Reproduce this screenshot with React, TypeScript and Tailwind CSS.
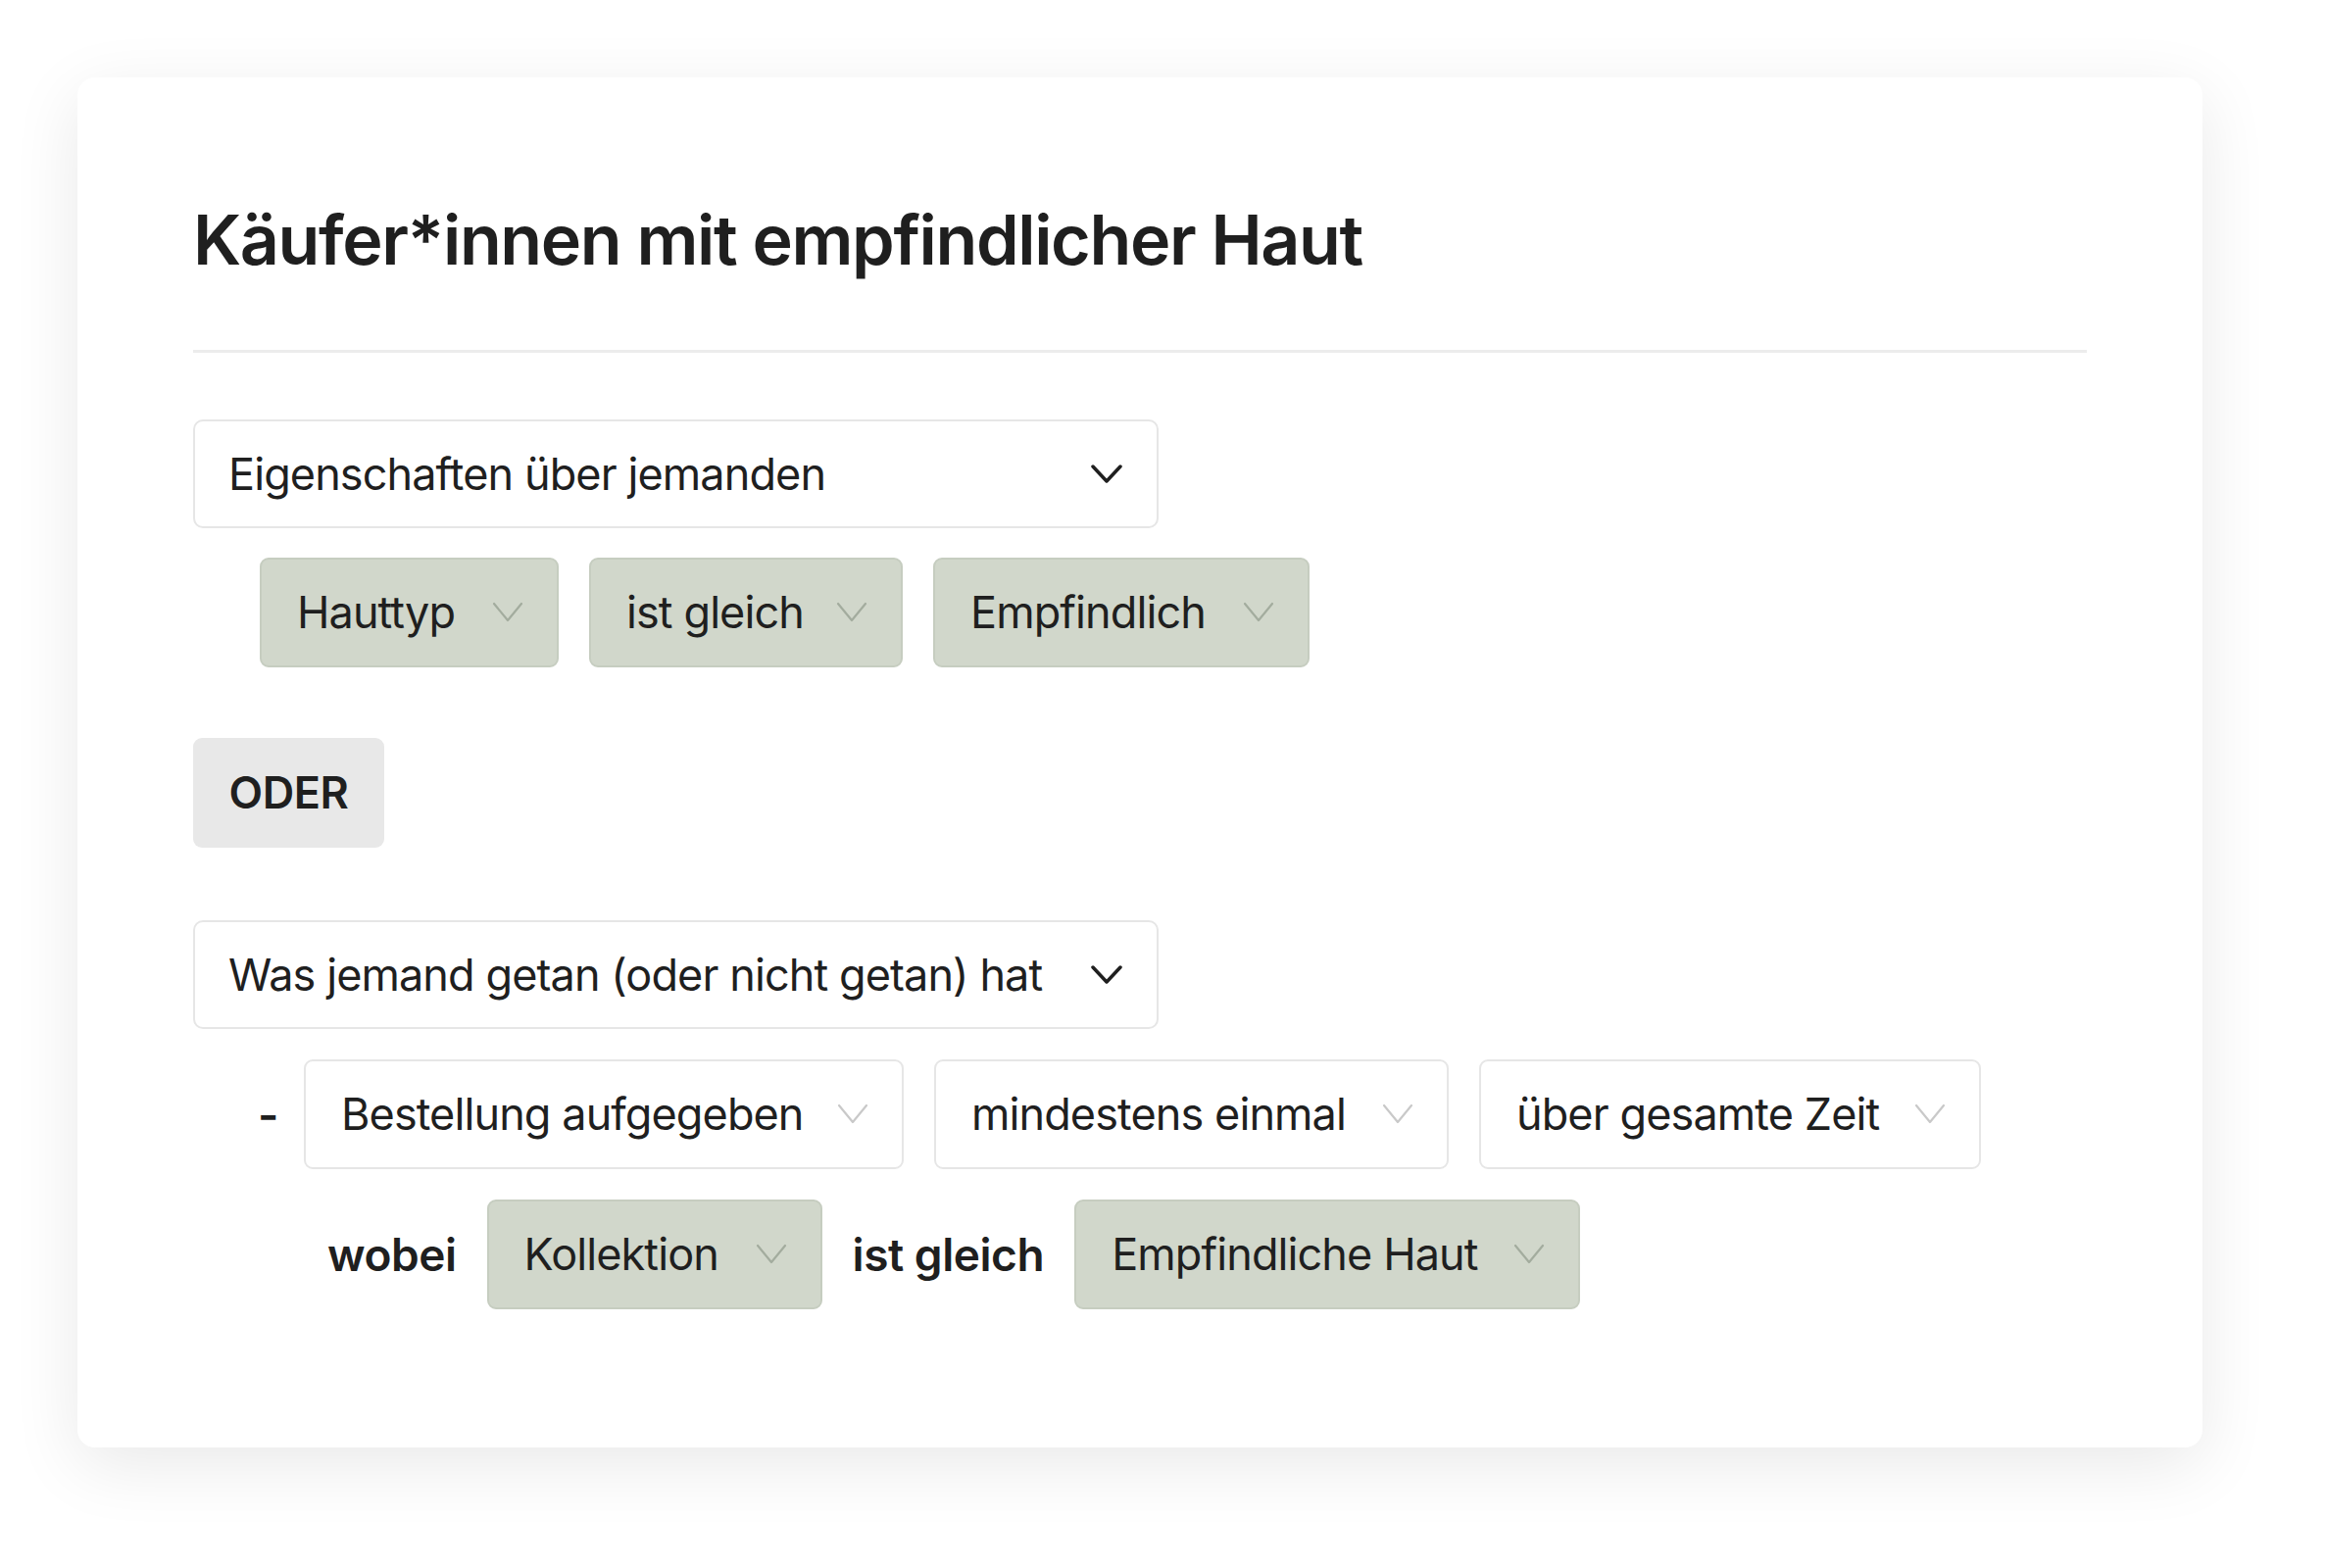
import type { ReactNode } from 'react';

// ── Chevrons ────────────────────────────────────────────────

function BoldChevron() {
  return (
    <svg width="32" height="21" viewBox="0 0 32 21" fill="none" className="shrink-0">
      <polyline points="2,3 16,18 30,3" stroke="#1f1f1f" strokeWidth="3.5" strokeLinecap="round" strokeLinejoin="round" />
    </svg>
  );
}

function ThinChevron({ color }: { color: string }) {
  return (
    <svg width="32" height="22" viewBox="0 0 32 22" fill="none" className="shrink-0">
      <polyline points="2,2 16,19 30,2" stroke={color} strokeWidth="2.2" strokeLinecap="round" strokeLinejoin="round" />
    </svg>
  );
}

// ── Pieces ──────────────────────────────────────────────────

function CategorySelect({ label }: { label: string }) {
  return (
    <div className="flex items-center justify-between w-[985px] h-[111px] pl-[34px] pr-[35px] bg-white border-2 border-[#e6e6e6] rounded-[10px]">
      <span>{label}</span>
      <BoldChevron />
    </div>
  );
}

interface ChipProps {
  label: string;
  width: string;
  tone: 'green' | 'white';
}

function Chip({ label, width, tone }: ChipProps) {
  const green = tone === 'green';
  return (
    <div
      className={`flex items-center justify-between h-[112px] pl-[36px] pr-[34px] rounded-[9px] border-2 ${width} ${
        green ? 'bg-[#d1d7cb] border-[#c6cdc0]' : 'bg-white border-[#e6e6e6]'
      }`}
    >
      <span className="whitespace-nowrap">{label}</span>
      <ThinChevron color={green ? '#a3ac9e' : '#c9c9c9'} />
    </div>
  );
}

function Word({ children }: { children: ReactNode }) {
  return <span className="text-[46px] font-semibold tracking-[-0.01em] whitespace-nowrap">{children}</span>;
}

// ── Main page ────────────────────────────────────────────────

export default function App() {
  return (
    <div
      className="min-h-screen bg-white pt-[79px] pl-[79px] text-[#1f1f1f]"
      style={{ fontFamily: 'Inter, "Noto Sans", sans-serif' }}
    >
      <div className="w-[2168px] bg-white rounded-[18px] shadow-[0_18px_70px_rgba(0,0,0,0.09)] px-[118px] pt-[123px] pb-[141px]">
        {/* Header */}
        <h1 className="text-[70px] leading-[86px] font-semibold tracking-[-0.02em]">
          Käufer*innen mit empfindlicher Haut
        </h1>
        <div className="mt-[69px] h-[3px] bg-[#ececec]" />

        {/* Rules */}
        <div className="mt-[68px] text-[45px] tracking-[-0.02em]">
          <CategorySelect label="Eigenschaften über jemanden" />

          <div className="mt-[30px] ml-[68px] flex gap-[31px]">
            <Chip label="Hauttyp" width="w-[305px]" tone="green" />
            <Chip label="ist gleich" width="w-[320px]" tone="green" />
            <Chip label="Empfindlich" width="w-[384px]" tone="green" />
          </div>

          <div className="mt-[72px] inline-flex items-center h-[112px] w-[195px] justify-center rounded-[9px] bg-[#e8e8e8] font-semibold tracking-[-0.01em]">
            ODER
          </div>

          <div className="mt-[74px]">
            <CategorySelect label="Was jemand getan (oder nicht getan) hat" />
          </div>

          <div className="mt-[31px] ml-[66px] flex items-center">
            <span className="w-[47px] text-[46px] font-semibold">-</span>
            <div className="flex gap-[31px]">
              <Chip label="Bestellung aufgegeben" width="w-[612px]" tone="white" />
              <Chip label="mindestens einmal" width="w-[525px]" tone="white" />
              <Chip label="über gesamte Zeit" width="w-[512px]" tone="white" />
            </div>
          </div>

          <div className="mt-[31px] ml-[137px] flex items-center gap-[31px]">
            <Word>wobei</Word>
            <Chip label="Kollektion" width="w-[342px]" tone="green" />
            <Word>ist gleich</Word>
            <Chip label="Empfindliche Haut" width="w-[516px]" tone="green" />
          </div>
        </div>
      </div>
    </div>
  );
}
